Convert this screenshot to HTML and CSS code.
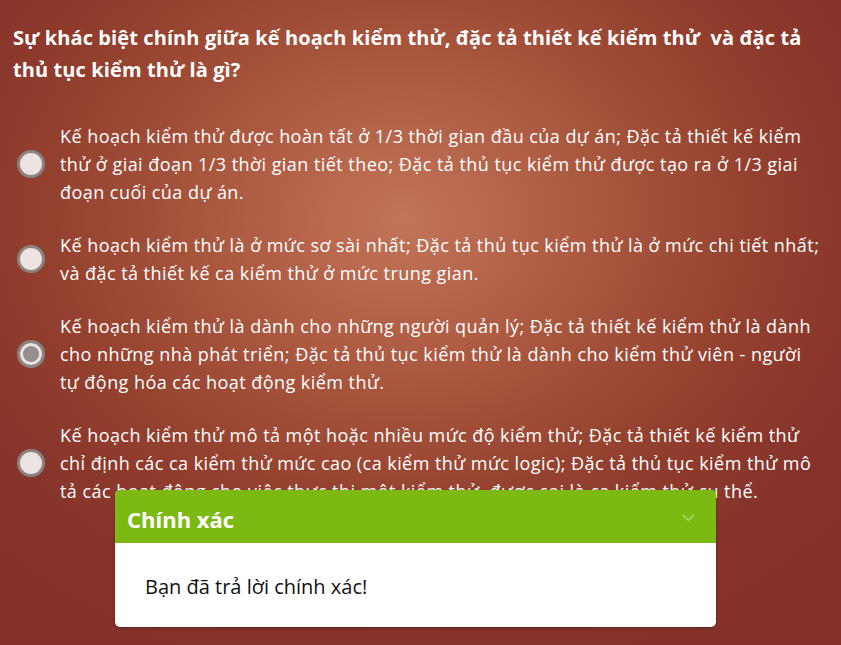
FILE: index.html
```html
<!DOCTYPE html>
<html lang="vi">
<head>
<meta charset="utf-8">
<link rel="stylesheet" href="styles.css">
</head>
<body>
<div class="page">
  <h1 class="question">Sự khác biệt chính giữa kế hoạch kiểm thử, đặc tả thiết kế kiểm thử &nbsp;và đặc tả thủ tục kiểm thử là gì?</h1>
  <div class="options">
    <label class="option"><span class="radio"></span><span class="text">Kế hoạch kiểm thử được hoàn tất ở 1/3 thời gian đầu của dự án; Đặc tả thiết kế kiểm thử ở giai đoạn 1/3 thời gian tiết theo; Đặc tả thủ tục kiểm thử được tạo ra ở 1/3 giai đoạn cuối của dự án.</span></label>
    <label class="option"><span class="radio"></span><span class="text">Kế hoạch kiểm thử là ở mức sơ sài nhất; Đặc tả thủ tục kiểm thử là ở mức chi tiết nhất; và đặc tả thiết kế ca kiểm thử ở mức trung gian.</span></label>
    <label class="option"><span class="radio checked"></span><span class="text">Kế hoạch kiểm thử là dành cho những người quản lý; Đặc tả thiết kế kiểm thử là dành cho những nhà phát triển; Đặc tả thủ tục kiểm thử là dành cho kiểm thử viên - người tự động hóa các hoạt động kiểm thử.</span></label>
    <label class="option"><span class="radio"></span><span class="text">Kế hoạch kiểm thử mô tả một hoặc nhiều mức độ kiểm thử; Đặc tả thiết kế kiểm thử chỉ định các ca kiểm thử mức cao (ca kiểm thử mức logic); Đặc tả thủ tục kiểm thử mô tả các hoạt động cho việc thực thi một kiểm thử, được coi là ca kiểm thử cụ thể.</span></label>
  </div>
</div>
<div class="feedback">
  <div class="feedback-head">
    <span class="feedback-title">Chính xác</span>
    <svg class="chevron" width="13" height="8" viewBox="0 0 13 8"><path d="M1 1 L6.5 6.5 L12 1" fill="none" stroke="#b9dc8c" stroke-width="1.2"/></svg>
  </div>
  <div class="feedback-body">Bạn đã trả lời chính xác!</div>
</div>
</body>
</html>
```
FILE: styles.css
```css
html, body {
  margin: 0;
  height: 100%;
}
body {
  background: radial-gradient(ellipse 75% 80% at 48% 34%, #c27558 0%, #ab5840 30%, #94412f 55%, #85322a 80%, #84312a 100%);
  font-family: "Open Sans", "Noto Sans", sans-serif;
  color: #fff;
  overflow: hidden;
}
.page {
  padding: 22px 13px 0 13px;
  width: 836px;
  box-sizing: border-box;
}
.question {
  margin: 0;
  font-size: 20px;
  letter-spacing: 0.1px;
  line-height: 32px;
  font-weight: 700;
}
.options {
  margin-top: 36px;
  display: flex;
  flex-direction: column;
  gap: 25px;
}
.option {
  display: flex;
  align-items: center;
  gap: 15px;
  padding-left: 4px;
}
.radio {
  flex: none;
  width: 28px;
  height: 28px;
  box-sizing: border-box;
  border-radius: 50%;
  border: 3px solid #8b8381;
  background: #ede3e3;
}
.radio.checked {
  background: #958f8f;
  box-shadow: inset 0 0 0 3px #ede3e3;
}
.text {
  font-size: 18px;
  letter-spacing: 0.45px;
  line-height: 28px;
}
.feedback {
  position: absolute;
  left: 115px;
  top: 490px;
  width: 601px;
  height: 137px;
  border-radius: 5px;
  overflow: hidden;
  background: #fff;
  box-shadow: 0 1px 3px rgba(0,0,0,0.3);
}
.feedback-head {
  height: 53px;
  background: #7db913;
  display: flex;
  align-items: center;
  justify-content: space-between;
  padding: 0 21px 0 12px;
}
.feedback-title {
  font-size: 22px;
  font-weight: 700;
  color: #fff;
  margin-top: 4px;
}
.chevron {
  margin-top: 2px;
}
.feedback-body {
  padding: 30px 0 0 30px;
  color: #111;
  font-size: 20px;
  line-height: 28px;
}
```
